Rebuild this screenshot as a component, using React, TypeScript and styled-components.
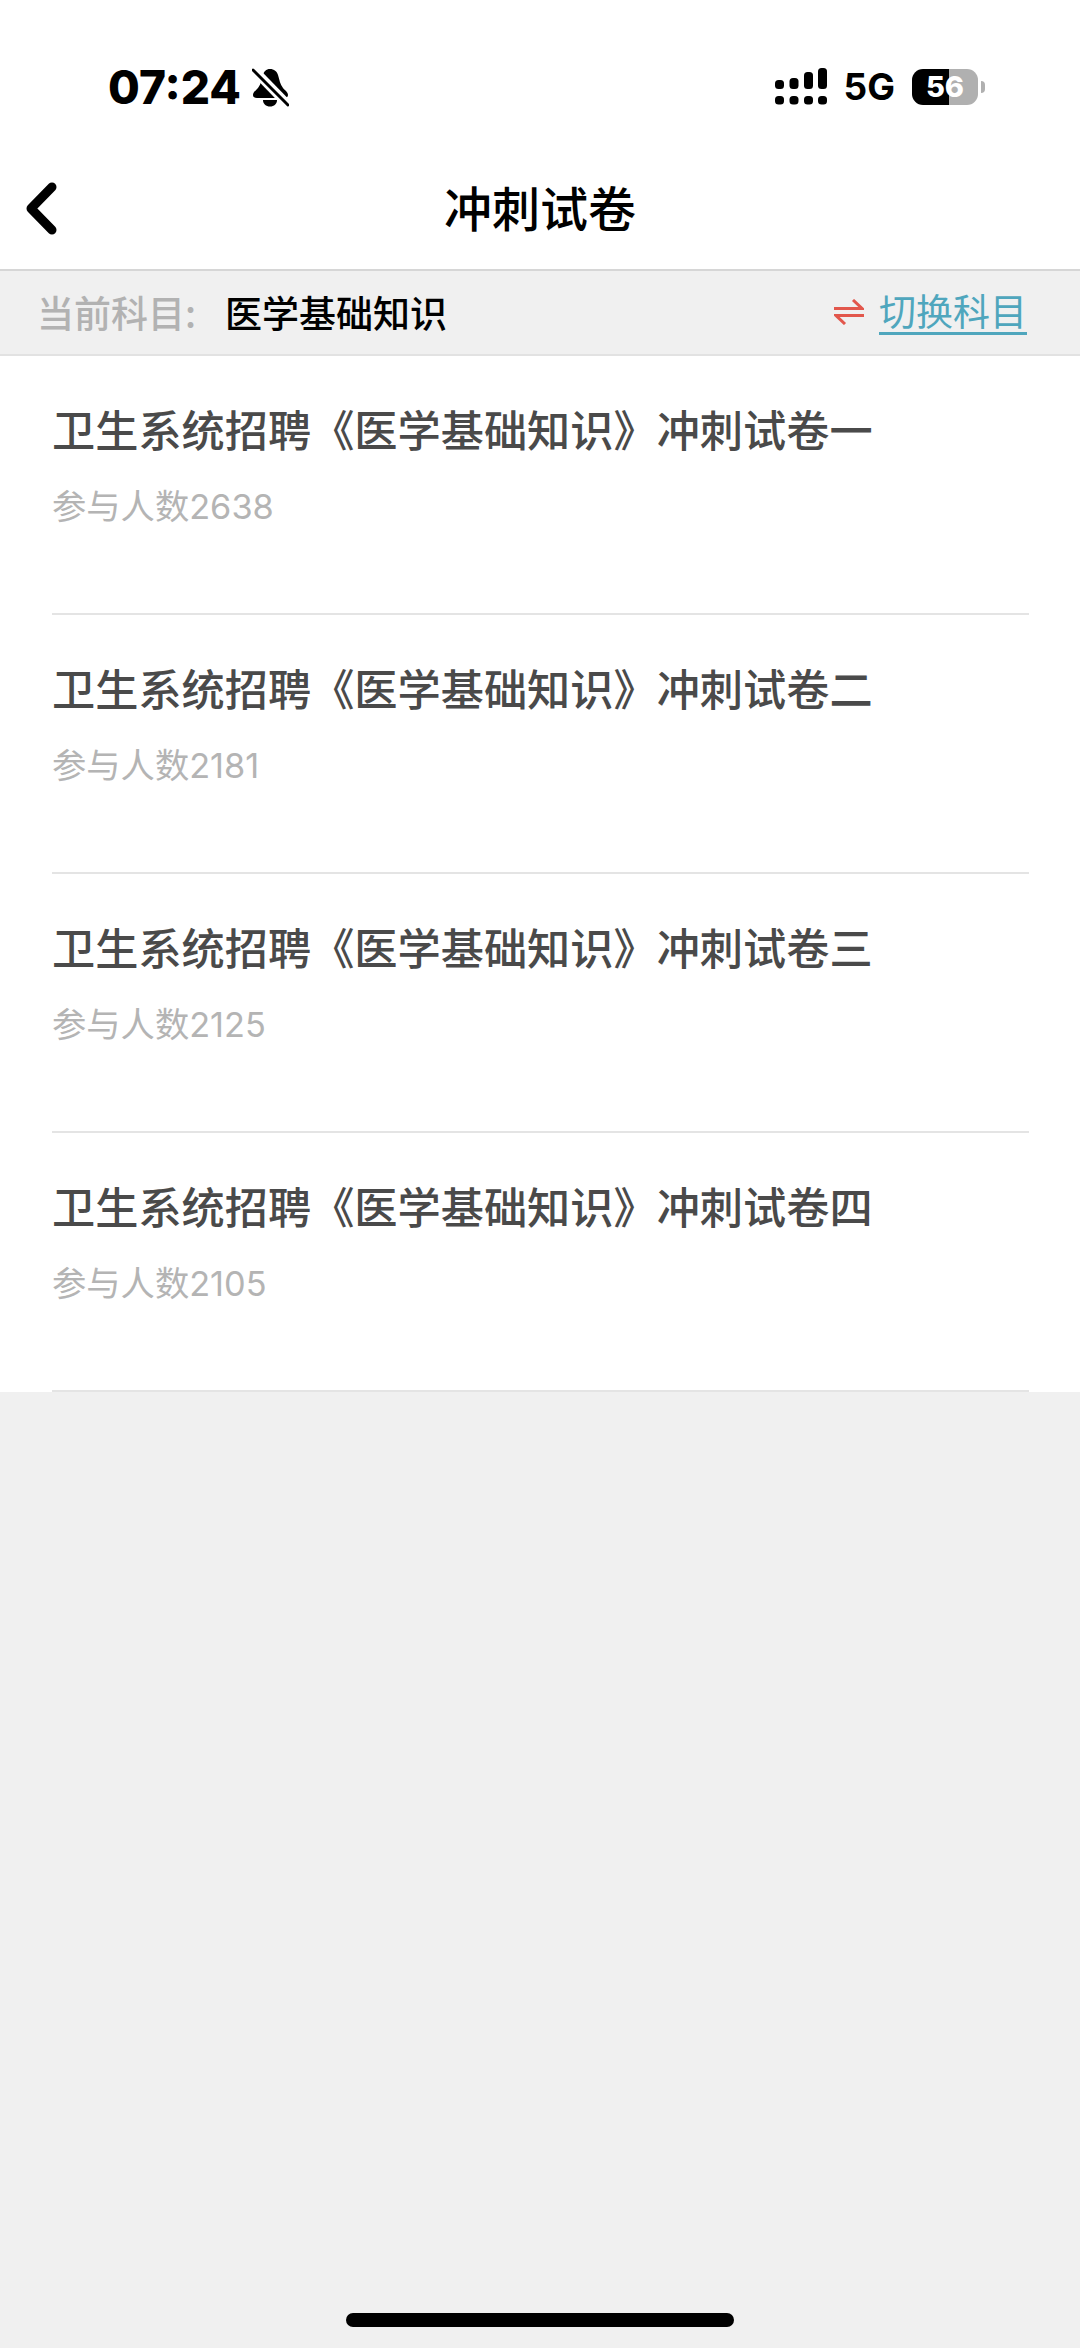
import React from "react";
import styled, { createGlobalStyle } from "styled-components";

const GlobalStyle = createGlobalStyle`
  html, body {
    margin: 0;
    padding: 0;
    background-color: #f0f0f0;
  }
  * {
    box-sizing: border-box;
  }
`;

const cjk = `"Noto Sans CJK SC", "Noto Sans", sans-serif`;

const Page = styled.div`
  width: 1080px;
  height: 2348px;
  display: flex;
  flex-direction: column;
  background-color: #f0f0f0;
  font-family: ${cjk};
  overflow: hidden;
`;

const StatusBar = styled.div`
  height: 150px;
  padding: 68px 95px 0 108px;
  display: flex;
  justify-content: space-between;
  align-items: flex-start;
  background-color: #fff;
`;

const StatusLeft = styled.div`
  display: flex;
  align-items: center;
  gap: 11px;
  height: 39px;
`;

const Clock = styled.span`
  font-family: Inter, "Liberation Sans", sans-serif;
  font-size: 46px;
  font-weight: 800;
  line-height: 39px;
  color: #000;
`;

const StatusRight = styled.div`
  display: flex;
  align-items: center;
  height: 37px;
`;

const NetworkLabel = styled.span`
  margin: 0 17px 0 17px;
  font-family: Inter, "Liberation Sans", sans-serif;
  font-size: 37px;
  font-weight: 700;
  line-height: 37px;
  color: #000;
`;

const Battery = styled.div`
  width: 66px;
  height: 36px;
  border-radius: 11px;
  display: flex;
  align-items: center;
  justify-content: center;
  background: linear-gradient(to right, #000 0 37px, #b0b0b0 37px 100%);
  font-family: Inter, "Liberation Sans", sans-serif;
  font-size: 29px;
  font-weight: 800;
  color: #fff;
`;

const BatteryNub = styled.div`
  width: 4px;
  height: 12px;
  margin-left: 3px;
  border-radius: 0 6px 6px 0;
  background-color: #b0b0b0;
`;

const NavBar = styled.div`
  height: 119px;
  display: grid;
  grid-template-columns: 1fr auto 1fr;
  align-items: center;
  padding-left: 24px;
  background-color: #fff;
`;

const BackButton = styled.button`
  width: 36px;
  height: 58px;
  padding: 0;
  border: none;
  background: none;
`;

const NavTitle = styled.h1`
  margin: 0 24px 8px 0;
  font-size: 48px;
  font-weight: 500;
  line-height: 64px;
  color: #000;
`;

const SubjectBar = styled.div`
  height: 87px;
  padding: 0 53px 2px 37px;
  display: flex;
  align-items: center;
  border-top: 2px solid #d6d6d6;
  border-bottom: 2px solid #e2e2e2;
  background-color: #f0f0f0;
`;

const SubjectLabel = styled.span`
  width: 188px;
  font-size: 37px;
  font-weight: 500;
  line-height: 48px;
  color: #b2b2b2;
`;

const SubjectName = styled.span`
  flex: 1;
  font-size: 37px;
  font-weight: 500;
  line-height: 48px;
  color: #000;
`;

const SwitchLink = styled.a`
  display: flex;
  align-items: center;
  gap: 15px;
  font-size: 37px;
  line-height: 48px;
  color: #4fa6bd;
`;

const SwitchText = styled.span`
  border-bottom: 3px solid #4fa6bd;
  line-height: 44px;
`;

const PaperList = styled.div`
  padding: 0 51px 0 52px;
  background-color: #fff;
`;

const PaperRow = styled.div`
  height: 259px;
  padding-top: 43px;
  border-bottom: 2px solid #e4e4e4;
`;

const PaperTitle = styled.div`
  height: 58px;
  font-size: 43.2px;
  font-weight: 500;
  line-height: 58px;
  color: #4a4a4a;
  white-space: nowrap;
`;

const PaperCount = styled.div`
  margin-top: 28px;
  font-family: Inter, ${cjk};
  font-size: 34.3px;
  line-height: 44px;
  color: #b4b4b4;
`;

const Footer = styled.div`
  flex: 1;
  display: flex;
  align-items: flex-end;
  justify-content: center;
  padding-bottom: 21px;
`;

const HomeIndicator = styled.div`
  width: 388px;
  height: 14px;
  border-radius: 7px;
  background-color: #000;
`;

const papers = [
  { name: "卫生系统招聘《医学基础知识》冲刺试卷一", count: 2638 },
  { name: "卫生系统招聘《医学基础知识》冲刺试卷二", count: 2181 },
  { name: "卫生系统招聘《医学基础知识》冲刺试卷三", count: 2125 },
  { name: "卫生系统招聘《医学基础知识》冲刺试卷四", count: 2105 },
];

const MutedBell = () => (
  <svg width="37" height="39" viewBox="0 0 37 39">
    <path
      d="M18 1c-4 0-6 2.500-7 6-1.500 5-2 9-5 13-2 2.500-5 4-5 7 0 2 1.500 3 4 3h27c2.500 0 4-1 4-3 0-3-3-4.500-5-7-3-4-3.500-8-5-13-1-3.500-4-6-8-6z"
      fill="#000"
    />
    <path d="M11 32h14c0 4-3 6.500-7 6.500s-7-2.500-7-6.500z" fill="#000" />
    <path d="M0 0l36 37" stroke="#fff" strokeWidth="9" />
    <path d="M1 2l35 35" stroke="#000" strokeWidth="3" strokeLinecap="round" />
  </svg>
);

const SignalBars = () => (
  <svg width="52" height="37" viewBox="0 0 52 37">
    {[0, 14.500, 29, 43].map((x) => (
      <rect key={x} x={x} y={28} width="9" height="8.500" rx="3.500" />
    ))}
    <rect x="0" y="12" width="9" height="9" rx="3.500" />
    <rect x="14.500" y="10" width="9" height="11" rx="3.500" />
    <rect x="29" y="4" width="9" height="17" rx="3.500" />
    <rect x="43" y="0" width="9" height="21" rx="3.500" />
  </svg>
);

const BackIcon = () => (
  <svg width="36" height="58" viewBox="0 0 36 58">
    <path
      d="M28 6L7 27.500 28 49"
      fill="none"
      stroke="#000"
      strokeWidth="9"
      strokeLinecap="round"
      strokeLinejoin="round"
    />
  </svg>
);

const SwitchArrows = () => (
  <svg width="30" height="26" viewBox="0 0 30 26">
    <path d="M0 9.500h28L19 1" fill="none" stroke="#e2574c" strokeWidth="3" />
    <path d="M30 16.500H2l9 8.500" fill="none" stroke="#e2574c" strokeWidth="3" />
  </svg>
);

export default function App(): JSX.Element {
  return (
    <Page>
      <GlobalStyle />
      <StatusBar>
        <StatusLeft>
          <Clock>07:24</Clock>
          <MutedBell />
        </StatusLeft>
        <StatusRight>
          <SignalBars />
          <NetworkLabel>5G</NetworkLabel>
          <Battery>56</Battery>
          <BatteryNub />
        </StatusRight>
      </StatusBar>
      <NavBar>
        <BackButton aria-label="返回">
          <BackIcon />
        </BackButton>
        <NavTitle>冲刺试卷</NavTitle>
      </NavBar>
      <SubjectBar>
        <SubjectLabel>当前科目:</SubjectLabel>
        <SubjectName>医学基础知识</SubjectName>
        <SwitchLink>
          <SwitchArrows />
          <SwitchText>切换科目</SwitchText>
        </SwitchLink>
      </SubjectBar>
      <PaperList>
        {papers.map((paper) => (
          <PaperRow key={paper.name}>
            <PaperTitle>{paper.name}</PaperTitle>
            <PaperCount>参与人数{paper.count}</PaperCount>
          </PaperRow>
        ))}
      </PaperList>
      <Footer>
        <HomeIndicator />
      </Footer>
    </Page>
  );
}
